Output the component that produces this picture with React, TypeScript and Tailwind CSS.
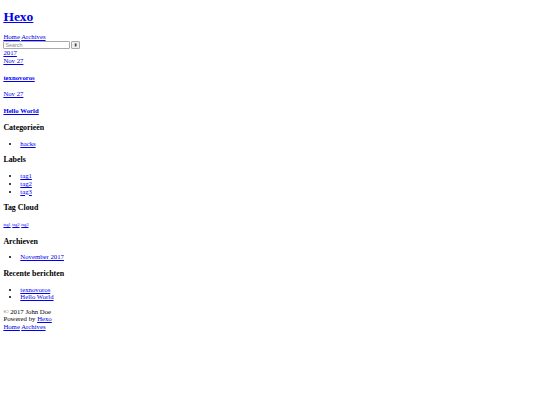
import React from "react";

const link = "text-[#0000ee] underline";

function Widget({ title, children }: { title: string; children: React.ReactNode }) {
  return (
    <div>
      <h3 className="my-[7.9px] text-[7.9px] leading-[9px] font-bold">{title}</h3>
      {children}
    </div>
  );
}

function List({ items }: { items: string[] }) {
  return (
    <ul className="my-[6.75px] list-disc pl-[16.9px]">
      {items.map((it) => (
        <li key={it}>
          <a href="#" className={link}>
            {it}
          </a>
        </li>
      ))}
    </ul>
  );
}

export default function App() {
  return (
    <div className="bg-white min-h-[405px] px-[3.375px] pb-[3.375px] font-['Liberation_Serif',serif] text-[6.75px] leading-[7.62px] text-black">
      <header>
        <h1 className="mb-[9.05px] pt-[8.6px] text-[13.5px] leading-[15.5px] font-bold">
          <a href="#" className={link}>
            Hexo
          </a>
        </h1>
        <nav>
          <a href="#" className={link}>
            Home
          </a>{" "}
          <a href="#" className={link}>
            Archives
          </a>
        </nav>
        <form className="flex h-[8.6px] items-center gap-[1px]">
          <input
            type="search"
            placeholder="Search"
            className="h-[7.8px] w-[67px] rounded-[1px] border border-[#a9a9a9] bg-white px-[1px] font-['Liberation_Sans',sans-serif] text-[5.4px] placeholder:text-[#8a8a8a]"
          />
          <button
            type="button"
            className="flex h-[7.8px] w-[8.5px] items-center justify-center rounded-[1px] border border-[#a9a9a9] bg-[#efefef] font-['DejaVu_Sans',sans-serif] text-[4px] text-[#333]"
          >
            ▮
          </button>
        </form>
      </header>

      <main>
        <a href="#" className={`${link} block w-fit`}>
          2017
        </a>
        <article>
          <a href="#" className={`${link} block w-fit`}>
            Nov 27
          </a>
          <h4 className="my-[8.9px] text-[6.75px] font-bold">
            <a href="#" className={link}>
              texnovoros
            </a>
          </h4>
        </article>
        <article>
          <a href="#" className={`${link} block w-fit`}>
            Nov 27
          </a>
          <h4 className="my-[8.9px] text-[6.75px] font-bold">
            <a href="#" className={link}>
              Hello World
            </a>
          </h4>
        </article>
      </main>

      <aside>
        <Widget title="Categorieën">
          <List items={["hacks"]} />
        </Widget>
        <Widget title="Labels">
          <List items={["tag1", "tag2", "tag3"]} />
        </Widget>
        <Widget title="Tag Cloud">
          <div>
            <a href="#" className={`${link} text-[4.22px]`}>
              tag1
            </a>{" "}
            <a href="#" className={`${link} text-[4.22px]`}>
              tag2
            </a>{" "}
            <a href="#" className={`${link} text-[4.22px]`}>
              tag3
            </a>
          </div>
        </Widget>
        <Widget title="Archieven">
          <List items={["November 2017"]} />
        </Widget>
        <Widget title="Recente berichten">
          <List items={["texnovoros", "Hello World"]} />
        </Widget>
      </aside>

      <footer>
        <div>© 2017 John Doe</div>
        <div>
          Powered by{" "}
          <a href="#" className={link}>
            Hexo
          </a>
        </div>
        <nav>
          <a href="#" className={link}>
            Home
          </a>{" "}
          <a href="#" className={link}>
            Archives
          </a>
        </nav>
      </footer>
    </div>
  );
}
